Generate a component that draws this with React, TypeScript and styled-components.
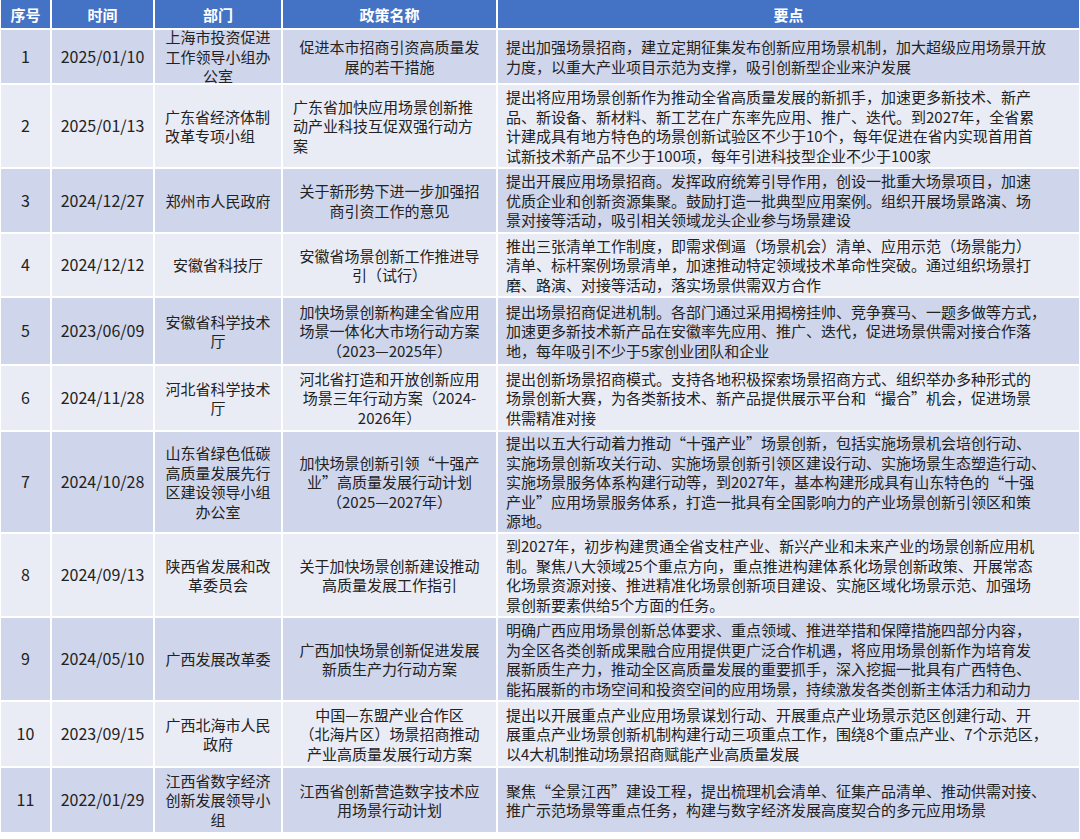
import React from 'react';
import styled, { createGlobalStyle } from 'styled-components';

const GlobalStyle = createGlobalStyle`
  body {
    margin: 0;
    background: #ffffff;
    font-family: "Noto Sans CJK SC", "Noto Sans", sans-serif;
  }
`;

type Align = 'left' | 'center';

interface Row {
  no: string;
  date: string;
  dept: string[];
  deptAlign?: Align;
  policy: string[];
  policyAlign?: Align;
  points: string[];
  height: number;
}

const rows: Row[] = [
  {
    no: '1', date: '2025/01/10', height: 55,
    dept: ['上海市投资促进', '工作领导小组办', '公室'],
    policy: ['促进本市招商引资高质量发', '展的若干措施'],
    points: ['提出加强场景招商，建立定期征集发布创新应用场景机制，加大超级应用场景开放', '力度，以重大产业项目示范为支撑，吸引创新型企业来沪发展'],
  },
  {
    no: '2', date: '2025/01/13', height: 84,
    dept: ['广东省经济体制', '改革专项小组'], deptAlign: 'left',
    policy: ['广东省加快应用场景创新推', '动产业科技互促双强行动方', '案'], policyAlign: 'left',
    points: ['提出将应用场景创新作为推动全省高质量发展的新抓手，加速更多新技术、新产', '品、新设备、新材料、新工艺在广东率先应用、推广、迭代。到2027年，全省累', '计建成具有地方特色的场景创新试验区不少于10个，每年促进在省内实现首用首', '试新技术新产品不少于100项，每年引进科技型企业不少于100家'],
  },
  {
    no: '3', date: '2024/12/27', height: 65,
    dept: ['郑州市人民政府'],
    policy: ['关于新形势下进一步加强招', '商引资工作的意见'],
    points: ['提出开展应用场景招商。发挥政府统筹引导作用，创设一批重大场景项目，加速', '优质企业和创新资源集聚。鼓励打造一批典型应用案例。组织开展场景路演、场', '景对接等活动，吸引相关领域龙头企业参与场景建设'],
  },
  {
    no: '4', date: '2024/12/12', height: 64,
    dept: ['安徽省科技厅'],
    policy: ['安徽省场景创新工作推进导', '引（试行）'],
    points: ['推出三张清单工作制度，即需求倒逼（场景机会）清单、应用示范（场景能力）', '清单、标杆案例场景清单，加速推动特定领域技术革命性突破。通过组织场景打', '磨、路演、对接等活动，落实场景供需双方合作'],
  },
  {
    no: '5', date: '2023/06/09', height: 68,
    dept: ['安徽省科学技术', '厅'],
    policy: ['加快场景创新构建全省应用', '场景一体化大市场行动方案', '（2023—2025年）'],
    points: ['提出场景招商促进机制。各部门通过采用揭榜挂帅、竞争赛马、一题多做等方式，', '加速更多新技术新产品在安徽率先应用、推广、迭代，促进场景供需对接合作落', '地，每年吸引不少于5家创业团队和企业'],
  },
  {
    no: '6', date: '2024/11/28', height: 66,
    dept: ['河北省科学技术', '厅'],
    policy: ['河北省打造和开放创新应用', '场景三年行动方案（2024-', '2026年）'],
    points: ['提出创新场景招商模式。支持各地积极探索场景招商方式、组织举办多种形式的', '场景创新大赛，为各类新技术、新产品提供展示平台和“撮合”机会，促进场景', '供需精准对接'],
  },
  {
    no: '7', date: '2024/10/28', height: 102,
    dept: ['山东省绿色低碳', '高质量发展先行', '区建设领导小组', '办公室'],
    policy: ['加快场景创新引领“十强产', '业”高质量发展行动计划', '（2025—2027年）'],
    points: ['提出以五大行动着力推动“十强产业”场景创新，包括实施场景机会培创行动、', '实施场景创新攻关行动、实施场景创新引领区建设行动、实施场景生态塑造行动、', '实施场景服务体系构建行动等，到2027年，基本构建形成具有山东特色的“十强', '产业”应用场景服务体系，打造一批具有全国影响力的产业场景创新引领区和策', '源地。'],
  },
  {
    no: '8', date: '2024/09/13', height: 84,
    dept: ['陕西省发展和改', '革委员会'],
    policy: ['关于加快场景创新建设推动', '高质量发展工作指引'],
    points: ['到2027年，初步构建贯通全省支柱产业、新兴产业和未来产业的场景创新应用机', '制。聚焦八大领域25个重点方向，重点推进构建体系化场景创新政策、开展常态', '化场景资源对接、推进精准化场景创新项目建设、实施区域化场景示范、加强场', '景创新要素供给5个方面的任务。'],
  },
  {
    no: '9', date: '2024/05/10', height: 84,
    dept: ['广西发展改革委'],
    policy: ['广西加快场景创新促进发展', '新质生产力行动方案'],
    points: ['明确广西应用场景创新总体要求、重点领域、推进举措和保障措施四部分内容，', '为全区各类创新成果融合应用提供更广泛合作机遇，将应用场景创新作为培育发', '展新质生产力，推动全区高质量发展的重要抓手，深入挖掘一批具有广西特色、', '能拓展新的市场空间和投资空间的应用场景，持续激发各类创新主体活力和动力'],
  },
  {
    no: '10', date: '2023/09/15', height: 66,
    dept: ['广西北海市人民', '政府'],
    policy: ['中国—东盟产业合作区', '（北海片区）场景招商推动', '产业高质量发展行动方案'],
    points: ['提出以开展重点产业应用场景谋划行动、开展重点产业场景示范区创建行动、开', '展重点产业场景创新机制构建行动三项重点工作，围绕8个重点产业、7个示范区，', '以4大机制推动场景招商赋能产业高质量发展'],
  },
  {
    no: '11', date: '2022/01/29', height: 66,
    dept: ['江西省数字经济', '创新发展领导小', '组'],
    policy: ['江西省创新营造数字技术应', '用场景行动计划'],
    points: ['聚焦“全景江西”建设工程，提出梳理机会清单、征集产品清单、推动供需对接、', '推广示范场景等重点任务，构建与数字经济发展高度契合的多元应用场景'],
  },
];

const Table = styled.div`
  display: grid;
  grid-template-columns: 49px 101px 126px 213px 1fr;
  column-gap: 2px;
  row-gap: 2px;
  width: 1078px;
  padding-left: 1px;
`;

const HeaderCell = styled.div`
  background: #4472c4;
  color: #ffffff;
  font-weight: 700;
  font-size: 15px;
  height: 28px;
  display: flex;
  align-items: center;
  justify-content: center;
`;

const Cell = styled.div<{ $odd: boolean; $h: number; $align: Align; $pad?: number; $size?: number }>`
  background: ${(p) => (p.$odd ? '#cfd5ea' : '#e9ebf5')};
  height: ${(p) => p.$h - 2}px;
  display: flex;
  flex-direction: column;
  justify-content: center;
  align-items: ${(p) => (p.$align === 'left' ? 'flex-start' : 'center')};
  text-align: ${(p) => p.$align};
  padding: 0 ${(p) => p.$pad ?? 4}px;
  font-size: ${(p) => p.$size ?? 15}px;
  line-height: 19.5px;
  color: #222222;
  white-space: nowrap;
  overflow: visible;
`;

const Line = styled.span`
  display: block;
`;

const Lines = ({ lines }: { lines: string[] }) => (
  <>
    {lines.map((l, i) => (
      <Line key={i}>{l}</Line>
    ))}
  </>
);

export default function App() {
  return (
    <>
      <GlobalStyle />
      <Table>
        {['序号', '时间', '部门', '政策名称', '要点'].map((h) => (
          <HeaderCell key={h}>{h}</HeaderCell>
        ))}
        {rows.map((r, i) => {
          const odd = i % 2 === 0;
          return (
            <React.Fragment key={r.no}>
              <Cell $odd={odd} $h={r.height} $align="center" $size={16}>{r.no}</Cell>
              <Cell $odd={odd} $h={r.height} $align="center" $size={16}>{r.date}</Cell>
              <Cell $odd={odd} $h={r.height} $align={r.deptAlign ?? 'center'} $pad={10}>
                <Lines lines={r.dept} />
              </Cell>
              <Cell $odd={odd} $h={r.height} $align={r.policyAlign ?? 'center'} $pad={10}>
                <Lines lines={r.policy} />
              </Cell>
              <Cell $odd={odd} $h={r.height} $align="left" $pad={8}>
                <Lines lines={r.points} />
              </Cell>
            </React.Fragment>
          );
        })}
      </Table>
    </>
  );
}
